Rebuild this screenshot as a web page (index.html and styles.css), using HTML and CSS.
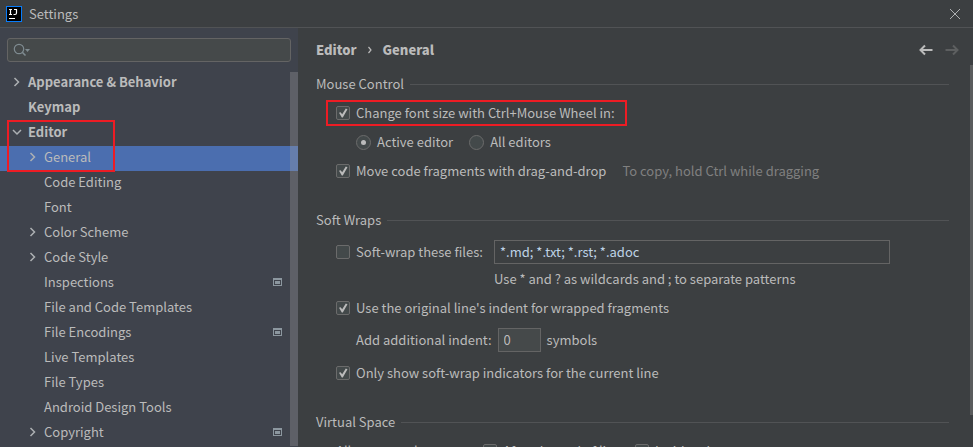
FILE: index.html
```html
<!DOCTYPE html>
<html lang="en">
<head>
<meta charset="utf-8">
<title>Settings</title>
<link rel="stylesheet" href="styles.css">
</head>
<body>
<svg class="defs" aria-hidden="true">
  <symbol id="chevron" viewBox="0 0 16 16"><path d="M5.5 4 9.5 8l-4 4" fill="none" stroke="currentColor" stroke-width="1.5"/></symbol>
  <symbol id="chevron-down" viewBox="0 0 16 16"><path d="M4 6l4 4 4-4" fill="none" stroke="currentColor" stroke-width="1.5"/></symbol>
  <symbol id="project" viewBox="0 0 9 8"><path fill-rule="evenodd" fill="currentColor" d="M0 0h9v8H0zM1 2v5h7V2zM2 3h5v3H2z"/></symbol>
</svg>
<header class="titlebar">
  <svg class="logo" viewBox="0 0 16 16" aria-hidden="true"><rect width="16" height="16" fill="#087cfa"/><rect x="1" y="1" width="14" height="14" fill="#000"/><path d="M3 3.500h3M4.500 3.500v5M3 8.500h3M8 3.500h2.500v3.500q0 1.500-1.500 1.500h-1.500M3 12.500h6" fill="none" stroke="#fff" stroke-width="1.200"/></svg>
  <h1 class="title">Settings</h1>
  <button class="icon-button" aria-label="Close"><svg width="16" height="16" viewBox="0 0 16 16"><path d="M3 3l10 10M13 3 3 13" stroke="#aeb0b2" fill="none"/></svg></button>
</header>
<div class="dialog">
  <aside class="sidebar">
    <label class="search">
      <svg width="18" height="14" viewBox="0 0 18 14" aria-hidden="true"><circle cx="6" cy="6" r="4.700" fill="none" stroke="#7f8b91" stroke-width="1.200"/><path d="M9.300 9.300l3.200 3.200" stroke="#7f8b91" stroke-width="1.600"/><path d="M12 6h5l-2.500 3z" fill="#7f8b91"/></svg>
      <input type="text" aria-label="Search settings">
    </label>
    <nav class="tree">
      <a class="item top" href="#"><svg class="arrow"><use href="#chevron"/></svg>Appearance &amp; Behavior</a>
      <a class="item top" href="#"><span class="arrow"></span>Keymap</a>
      <a class="item top" href="#"><svg class="arrow"><use href="#chevron-down"/></svg>Editor</a>
      <a class="item selected" href="#"><svg class="arrow"><use href="#chevron"/></svg>General</a>
      <a class="item" href="#"><span class="arrow"></span>Code Editing</a>
      <a class="item" href="#"><span class="arrow"></span>Font</a>
      <a class="item" href="#"><svg class="arrow"><use href="#chevron"/></svg>Color Scheme</a>
      <a class="item" href="#"><svg class="arrow"><use href="#chevron"/></svg>Code Style</a>
      <a class="item" href="#"><span class="arrow"></span>Inspections<svg class="project"><use href="#project"/></svg></a>
      <a class="item" href="#"><span class="arrow"></span>File and Code Templates</a>
      <a class="item" href="#"><span class="arrow"></span>File Encodings<svg class="project"><use href="#project"/></svg></a>
      <a class="item" href="#"><span class="arrow"></span>Live Templates</a>
      <a class="item" href="#"><span class="arrow"></span>File Types</a>
      <a class="item" href="#"><span class="arrow"></span>Android Design Tools</a>
      <a class="item" href="#"><svg class="arrow"><use href="#chevron"/></svg>Copyright<svg class="project"><use href="#project"/></svg></a>
      <span class="scrollbar"></span>
      <span class="mark mark-tree"></span>
    </nav>
  </aside>
  <main class="content">
    <div class="heading">
      <b>Editor</b>
      <svg width="6" height="8" viewBox="0 0 6 8" aria-hidden="true"><path d="M1.500 1l2.500 3-2.500 3" fill="none" stroke="#bbb" stroke-width="1.200"/></svg>
      <b>General</b>
      <button class="icon-button back" aria-label="Back"><svg width="16" height="16" viewBox="0 0 16 16"><path d="M14.500 8H3M7 3.500 2.500 8 7 12.500" fill="none" stroke="#bbb" stroke-width="2"/></svg></button>
      <button class="icon-button" aria-label="Forward" disabled><svg width="16" height="16" viewBox="0 0 16 16"><path d="M1.500 8H13M9 3.500 13.500 8 9 12.500" fill="none" stroke="#5d5f60" stroke-width="2"/></svg></button>
    </div>
    <section>
      <h2>Mouse Control</h2>
      <div class="row">
        <label><input type="checkbox" checked>Change font size with Ctrl+Mouse Wheel in:</label>
        <span class="mark mark-row"></span>
      </div>
      <div class="row nested radios">
        <label><input type="radio" name="zoom" checked>Active editor</label>
        <label><input type="radio" name="zoom">All editors</label>
      </div>
      <div class="row">
        <label><input type="checkbox" checked>Move code fragments with drag-and-drop</label>
        <span class="comment">To copy, hold Ctrl while dragging</span>
      </div>
    </section>
    <section>
      <h2>Soft Wraps</h2>
      <div class="wrap-files">
        <label><input type="checkbox">Soft-wrap these files:</label>
        <input class="field" type="text" value="*.md; *.txt; *.rst; *.adoc" aria-label="File patterns">
        <span class="hint">Use * and ? as wildcards and ; to separate patterns</span>
      </div>
      <div class="row">
        <label><input type="checkbox" checked>Use the original line's indent for wrapped fragments</label>
      </div>
      <div class="row nested indent">
        <label for="indent">Add additional indent:</label>
        <input class="field" id="indent" type="text" value="0">
        <span>symbols</span>
      </div>
      <div class="row">
        <label><input type="checkbox" checked>Only show soft-wrap indicators for the current line</label>
      </div>
    </section>
    <section>
      <h2>Virtual Space</h2>
      <div class="row caret">
        <span>Allow caret placement:</span>
        <label><input type="checkbox">After the end of line</label>
        <label><input type="checkbox">Inside tabs</label>
      </div>
    </section>
    <span class="scrollbar page"></span>
  </main>
</div>
</body>
</html>
```
FILE: styles.css
```css
* { box-sizing: border-box; }

body {
  display: flex;
  flex-direction: column;
  height: 100vh;
  margin: 0;
  overflow: hidden;
  background: #3c3f41;
  color: #bbb;
  font: 13px/24px "Noto Sans CJK SC", "Noto Sans", sans-serif;
  white-space: nowrap;
}

.defs { display: none; }

h1, h2 { margin: 0; font-size: inherit; font-weight: 400; }

.titlebar {
  display: flex;
  flex: none;
  align-items: center;
  height: 28px;
  padding: 0 10px 0 6px;
  border-bottom: 1px solid #515355;
}

.logo { width: 16px; height: 16px; margin-right: 7px; }
.title { flex: 1; }

.icon-button {
  display: flex;
  padding: 0;
  border: 0;
  background: none;
}

.dialog { display: flex; flex: 1; min-height: 0; }

.sidebar {
  flex: none;
  width: 298px;
  padding-top: 10px;
  background: #3f434c;
}

.search {
  display: flex;
  align-items: center;
  height: 24px;
  margin: 0 7px 9px;
  padding-left: 5px;
  border: 1px solid #646464;
  border-radius: 3px;
  background: #45494a;
}

.search input {
  flex: 1;
  min-width: 0;
  border: 0;
  outline: 0;
  background: none;
  color: inherit;
  font: inherit;
}

.tree { position: relative; }

.item {
  display: flex;
  align-items: center;
  height: 25px;
  padding: 0 16px 3px 25px;
  color: inherit;
  text-decoration: none;
}

.top { padding-left: 9px; font-weight: 700; }
.selected { background: #4b6eaf; }
.arrow { flex: none; width: 16px; height: 16px; margin-right: 3px; color: #adb0b3; }
.project { width: 9px; height: 8px; margin-left: auto; color: #8c979f; }

.scrollbar {
  position: absolute;
  top: 1px;
  right: 0;
  bottom: 0;
  width: 8px;
  background: rgba(166, 166, 166, 0.3);
}

.mark { position: absolute; border: 2px solid #ed1c24; }
.mark-tree { top: 49px; left: 7px; width: 108px; height: 52px; }
.mark-row { inset: -1px -12px -1px -10px; }

.content {
  position: relative;
  flex: 1;
  min-width: 0;
  padding: 0 24px 0 18px;
}

.heading { display: flex; align-items: center; gap: 10px; height: 44px; margin-right: -11px; font-weight: 700; }
.back { margin-left: auto; }

section { margin-bottom: 25px; }

h2 { display: flex; align-items: center; gap: 6px; margin-bottom: 5px; }
h2::after { content: ""; flex: 1; height: 1px; background: #515355; }

.row {
  position: relative;
  display: flex;
  align-items: center;
  width: fit-content;
  margin: 0 0 5px 20px;
}

.nested { margin-left: 40px; }
label { display: flex; align-items: center; }
.radios { gap: 16px; }
.comment { margin-left: 16px; color: #808080; }

input[type="checkbox"], input[type="radio"] {
  position: relative;
  flex: none;
  appearance: none;
  width: 14px;
  height: 14px;
  margin: 0 6px 0 0;
  border: 1px solid #6b6b6b;
  border-radius: 2px;
  background: #43494a;
}

input[type="radio"] { width: 15px; height: 15px; border-radius: 50%; }

input[type="checkbox"]:checked::before {
  content: "";
  position: absolute;
  inset: 1px;
  background: #bbb;
  clip-path: polygon(10% 48%, 26% 42%, 42% 62%, 78% 6%, 95% 12%, 48% 94%, 38% 94%);
}

input[type="radio"]:checked::before {
  content: "";
  position: absolute;
  inset: 4px;
  border-radius: 50%;
  background: #bbb;
}

.field {
  height: 24px;
  padding: 0 5px;
  border: 1px solid #646464;
  border-radius: 0;
  background: #45494a;
  color: #bbb;
  font: inherit;
}

.wrap-files {
  display: grid;
  grid-template-columns: 158px 1fr;
  row-gap: 3px;
  margin: 8px 59px 5px 20px;
}

.wrap-files .field { background: #3c3f41; color: #bfd3e6; }
.hint { grid-column: 2; }
.indent { gap: 6px; margin-top: 8px; margin-bottom: 9px; }
.indent .field { width: 43px; }
.caret > :nth-child(1) { width: 147px; }
.caret > :nth-child(2) { width: 152px; }

.page { top: 37px; bottom: 32px; width: 3px; background: #5a5c5d; }
```
